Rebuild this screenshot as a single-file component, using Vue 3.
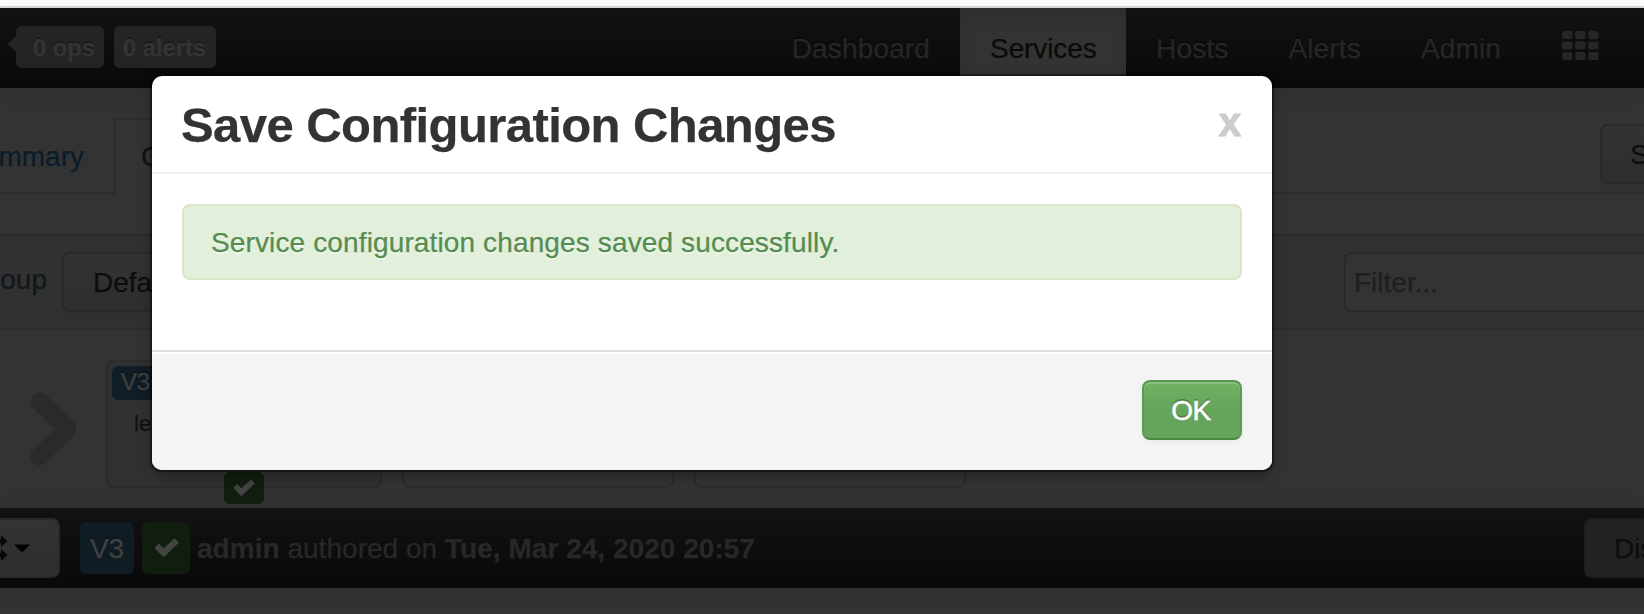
<script setup>
const navItems = [
  { label: 'Dashboard', active: false },
  { label: 'Services', active: true },
  { label: 'Hosts', active: false },
  { label: 'Alerts', active: false },
  { label: 'Admin', active: false },
]
const checkPath = 'M1.4 9.5 L4.6 6.2 L9.3 10.8 L19.6 1.2 L22.8 4.4 L9.3 17.4z'
</script>

<template>
  <div class="page">
    <div class="chrome-edge"></div>

    <header class="navbar">
      <div class="badges">
        <span class="badge ops">0 ops</span>
        <span class="badge">0 alerts</span>
      </div>
      <nav class="menu">
        <a v-for="item in navItems" :key="item.label" class="menu-item" :class="{ active: item.active }">{{ item.label }}</a>
        <svg class="grid-icon" width="37" height="30" viewBox="0 0 37 30">
          <template v-for="r in 3" :key="r">
            <rect v-for="c in 3" :key="c" :x="(c - 1) * 13.1" :y="(r - 1) * 10.5" width="10.4" height="8" rx="2" fill="#262626" />
          </template>
        </svg>
      </nav>
    </header>

    <div class="tabs">
      <div class="tab summary">mmary</div>
      <div class="tab current">C</div>
      <div class="tab-rest"></div>
      <div class="btn actions">S</div>
    </div>

    <div class="filter-bar">
      <div class="group-label">oup</div>
      <div class="btn group-btn">Defa</div>
      <div class="filter">Filter...</div>
    </div>

    <div class="versions">
      <svg class="chevron" width="50" height="76" viewBox="0 0 50 76">
        <polyline points="11.5,11.5 39.5,39 11.5,66.5" fill="none" stroke="#282a2c" stroke-width="18" stroke-linecap="round" stroke-linejoin="round" />
      </svg>
      <div class="card selected">
        <span class="version-tag">V3</span>
        <span class="age">les</span>
        <span class="check-tag">
          <svg width="22" height="18" viewBox="0 0 24 19">
            <path :d="checkPath" fill="#444" stroke="#444" stroke-width="1.6" stroke-linejoin="round" />
          </svg>
        </span>
      </div>
      <div class="card"></div>
      <div class="card"></div>
    </div>

    <div class="info-bar">
      <div class="switcher">
        <svg width="31" height="26" viewBox="0 0 31 26">
          <path d="M0 3.5H1V0L7.5 6 1 12V8.5H0zM0 17.5H1V14L7.5 20 1 26V22.5H0z" fill="#080808" />
          <path d="M14 9.5H30L22 17.5z" fill="#000" />
        </svg>
      </div>
      <span class="label blue">V3</span>
      <span class="label green">
        <svg width="25" height="20" viewBox="0 0 24 19">
          <path :d="checkPath" fill="#444" stroke="#444" stroke-width="1.6" stroke-linejoin="round" />
        </svg>
      </span>
      <span class="author"><b>admin</b> authored on <b>Tue, Mar 24, 2020 20:57</b></span>
      <div class="discard">Dis</div>
    </div>

    <section class="modal">
      <div class="modal-head">
        <h3>Save Configuration Changes</h3>
        <span class="close">x</span>
      </div>
      <div class="modal-body">
        <div class="alert">Service configuration changes saved successfully.</div>
      </div>
      <div class="modal-foot">
        <button class="ok">OK</button>
      </div>
    </section>
  </div>
</template>

<style>
body {
  margin: 0;
  background: #333;
}
</style>

<style scoped>
* {
  box-sizing: border-box;
}
.page {
  position: relative;
  display: flex;
  flex-direction: column;
  width: 1644px;
  height: 614px;
  overflow: hidden;
  background: #333;
  font-family: "Liberation Sans", Arial, sans-serif;
  font-size: 28px;
  line-height: 40px;
  white-space: nowrap;
  -webkit-text-stroke-width: 0.25px;
}
.chrome-edge {
  flex: none;
  height: 8px;
  background: #fff;
  border-bottom: 2px solid #dcdde1;
}
.navbar {
  flex: none;
  display: flex;
  justify-content: space-between;
  height: 80px;
  background: linear-gradient(#121212, #090909);
  box-shadow: 0 2px 20px rgba(0, 0, 0, 0.1);
}
.badges {
  display: flex;
  gap: 10px;
  padding: 18px 0 0 16px;
}
.badge {
  position: relative;
  width: 102px;
  height: 42px;
  padding-left: 9px;
  border-radius: 6px;
  background: #242424;
  color: #343434;
  font-size: 23.7px;
  font-weight: bold;
  line-height: 44px;
  text-shadow: 0 -2px 0 rgba(0, 0, 0, 0.25);
}
.badge.ops {
  width: 88px;
  padding-left: 17px;
}
.badge.ops::before {
  content: "";
  position: absolute;
  left: -8px;
  top: 10px;
  border: solid transparent;
  border-width: 8px 8px 8px 0;
  border-right-color: #242424;
}
.menu {
  display: flex;
  padding-right: 45px;
}
.menu-item {
  padding: 0 30px;
  line-height: 82px;
  color: #262626;
  letter-spacing: 0.15px;
  text-shadow: 0 -2px 0 rgba(0, 0, 0, 0.25);
}
.menu-item.active {
  width: 166px;
  background: #333;
  box-shadow: inset 0 6px 16px rgba(0, 0, 0, 0.12);
  color: #0b0b0b;
  letter-spacing: -0.1px;
  text-shadow: none;
}
.grid-icon {
  margin: 23px 0 0 31px;
}
.tabs {
  flex: none;
  display: flex;
  height: 106px;
  padding-top: 30px;
}
.tab {
  height: 76px;
  line-height: 78px;
}
.summary {
  display: flex;
  justify-content: flex-end;
  width: 114px;
  padding-right: 30px;
  border-bottom: 2px solid #2c2c2c;
  color: #0a1c29;
}
.current {
  width: 170px;
  padding-left: 25px;
  border: 2px solid #2c2c2c;
  border-bottom: 0;
  color: #111;
  line-height: 74px;
}
.tab-rest {
  flex: 1;
  border-bottom: 2px solid #2c2c2c;
}
.btn {
  height: 60px;
  padding-left: 29px;
  border: 2px solid #292929;
  border-radius: 8px;
  background: linear-gradient(#333, #2e2e2e);
  color: #0d0d0d;
  line-height: 57px;
  box-shadow: 0 2px 4px rgba(0, 0, 0, 0.05);
}
.actions {
  position: relative;
  flex: none;
  width: 200px;
  margin: 6px -156px 0 0;
  padding-left: 28px;
}
.actions::before {
  content: "";
  position: absolute;
  left: -2px;
  right: 0;
  bottom: -12px;
  height: 2px;
  background: #2c2c2c;
}
.filter-bar {
  flex: none;
  display: flex;
  align-items: center;
  height: 96px;
  margin-top: 40px;
  border: solid #292b2d;
  border-width: 2px 0;
  background: #2f3133;
}
.group-label {
  flex: none;
  display: flex;
  justify-content: flex-end;
  width: 62px;
  padding: 0 15px 4px 0;
  color: #151617;
}
.group-btn {
  flex: none;
  width: 200px;
}
.filter {
  flex: none;
  width: 320px;
  height: 60px;
  margin-left: 1082px;
  padding-left: 8px;
  border: 2px solid #292929;
  border-radius: 8px;
  background: #333;
  color: #1f1f1f;
  line-height: 57px;
}
.versions {
  flex: none;
  display: flex;
  height: 178px;
  padding: 30px 0 0 28px;
}
.chevron {
  flex: none;
  margin: 30px 28px 0 0;
}
.card {
  flex: none;
  width: 272px;
  height: 128px;
  margin-left: 20px;
  border: 2px solid #2c2c2c;
  border-radius: 8px;
}
.card.selected {
  position: relative;
  display: flex;
  flex-direction: column;
  width: 276px;
  margin: 0;
  padding: 4px;
  border-color: #2a2c2e;
  background: #2f3133;
}
.version-tag {
  width: 48px;
  height: 34px;
  padding-left: 9px;
  border-radius: 6px;
  background: #101d26;
  color: #404040;
  font-size: 23.7px;
  line-height: 33px;
  text-shadow: 0 -2px 0 rgba(0, 0, 0, 0.25);
}
.age {
  padding: 4px 0 0 22px;
  color: #111;
  font-size: 22px;
}
.check-tag {
  position: absolute;
  left: 116px;
  top: 110px;
  display: flex;
  align-items: center;
  justify-content: center;
  width: 40px;
  height: 32px;
  border-radius: 6px;
  background: #101d0f;
}
.info-bar {
  flex: none;
  display: flex;
  align-items: center;
  height: 80px;
  background: linear-gradient(#121212, #090909);
  box-shadow: 0 2px 20px rgba(0, 0, 0, 0.1);
}
.switcher {
  display: flex;
  align-items: center;
  width: 60px;
  height: 60px;
  margin-right: 20px;
  border: 2px solid #292929;
  border-left: 0;
  border-radius: 0 8px 8px 0;
  background: linear-gradient(#333, #2e2e2e);
}
.label {
  display: flex;
  align-items: center;
  justify-content: center;
  width: 54px;
  height: 52px;
  border-radius: 6px;
  color: #404040;
}
.blue {
  padding-top: 1px;
  background: #101c24;
  text-shadow: 0 -2px 0 rgba(0, 0, 0, 0.25);
}
.green {
  width: 48px;
  margin: 0 7px 0 8px;
  background: #101d0f;
}
.author {
  padding-top: 2px;
  color: #282828;
  letter-spacing: 0.03px;
}
.discard {
  flex: none;
  width: 120px;
  height: 60px;
  margin: 0 -60px 0 auto;
  padding-left: 28px;
  border: 2px solid #1e1e1e;
  border-radius: 8px;
  background: #222;
  color: #0d0d0d;
  line-height: 57px;
}
.modal {
  position: absolute;
  left: 152px;
  top: 76px;
  display: flex;
  flex-direction: column;
  width: 1120px;
  height: 394px;
  border-radius: 10px;
  background: #fff;
  box-shadow: 0 0 0 2px rgba(0, 0, 0, 0.4), 0 6px 14px rgba(0, 0, 0, 0.3);
}
.modal-head {
  display: flex;
  justify-content: space-between;
  height: 98px;
  padding: 0 31px 0 29px;
  border-bottom: 2px solid #eee;
}
h3 {
  margin: 0;
  color: #333;
  font-size: 49px;
  letter-spacing: -0.57px;
  line-height: 98px;
}
.close {
  color: #ccc;
  font-size: 40px;
  font-weight: bold;
  line-height: 93px;
  -webkit-text-stroke-width: 1px;
}
.modal-body {
  flex: 1;
  padding: 30px 30px 0;
}
.alert {
  height: 76px;
  padding-left: 27px;
  border: 2px solid #d8e7c8;
  border-radius: 8px;
  background: #e1efdb;
  color: #568c50;
  letter-spacing: 0.13px;
  line-height: 74px;
  text-shadow: 0 2px 0 rgba(255, 255, 255, 0.5);
}
.modal-foot {
  display: flex;
  justify-content: flex-end;
  height: 120px;
  padding: 28px 30px 0;
  border-top: 2px solid #ddd;
  border-radius: 0 0 10px 10px;
  background: #f4f4f4;
  box-shadow: inset 0 2px 0 #fff;
}
.ok {
  width: 100px;
  height: 60px;
  padding: 0 2px 0 0;
  border: 2px solid #5b9a53;
  border-bottom-color: #4d8545;
  border-radius: 8px;
  background: linear-gradient(#70b163, #65a45b 50%);
  box-shadow: inset 0 2px 0 rgba(255, 255, 255, 0.2), 0 2px 4px rgba(0, 0, 0, 0.05);
  color: #fff;
  font-family: inherit;
  font-size: 28px;
  letter-spacing: -0.5px;
  line-height: 57px;
  text-shadow: 0 -2px 0 rgba(0, 0, 0, 0.25);
  -webkit-text-stroke-width: 0.5px;
}
</style>
